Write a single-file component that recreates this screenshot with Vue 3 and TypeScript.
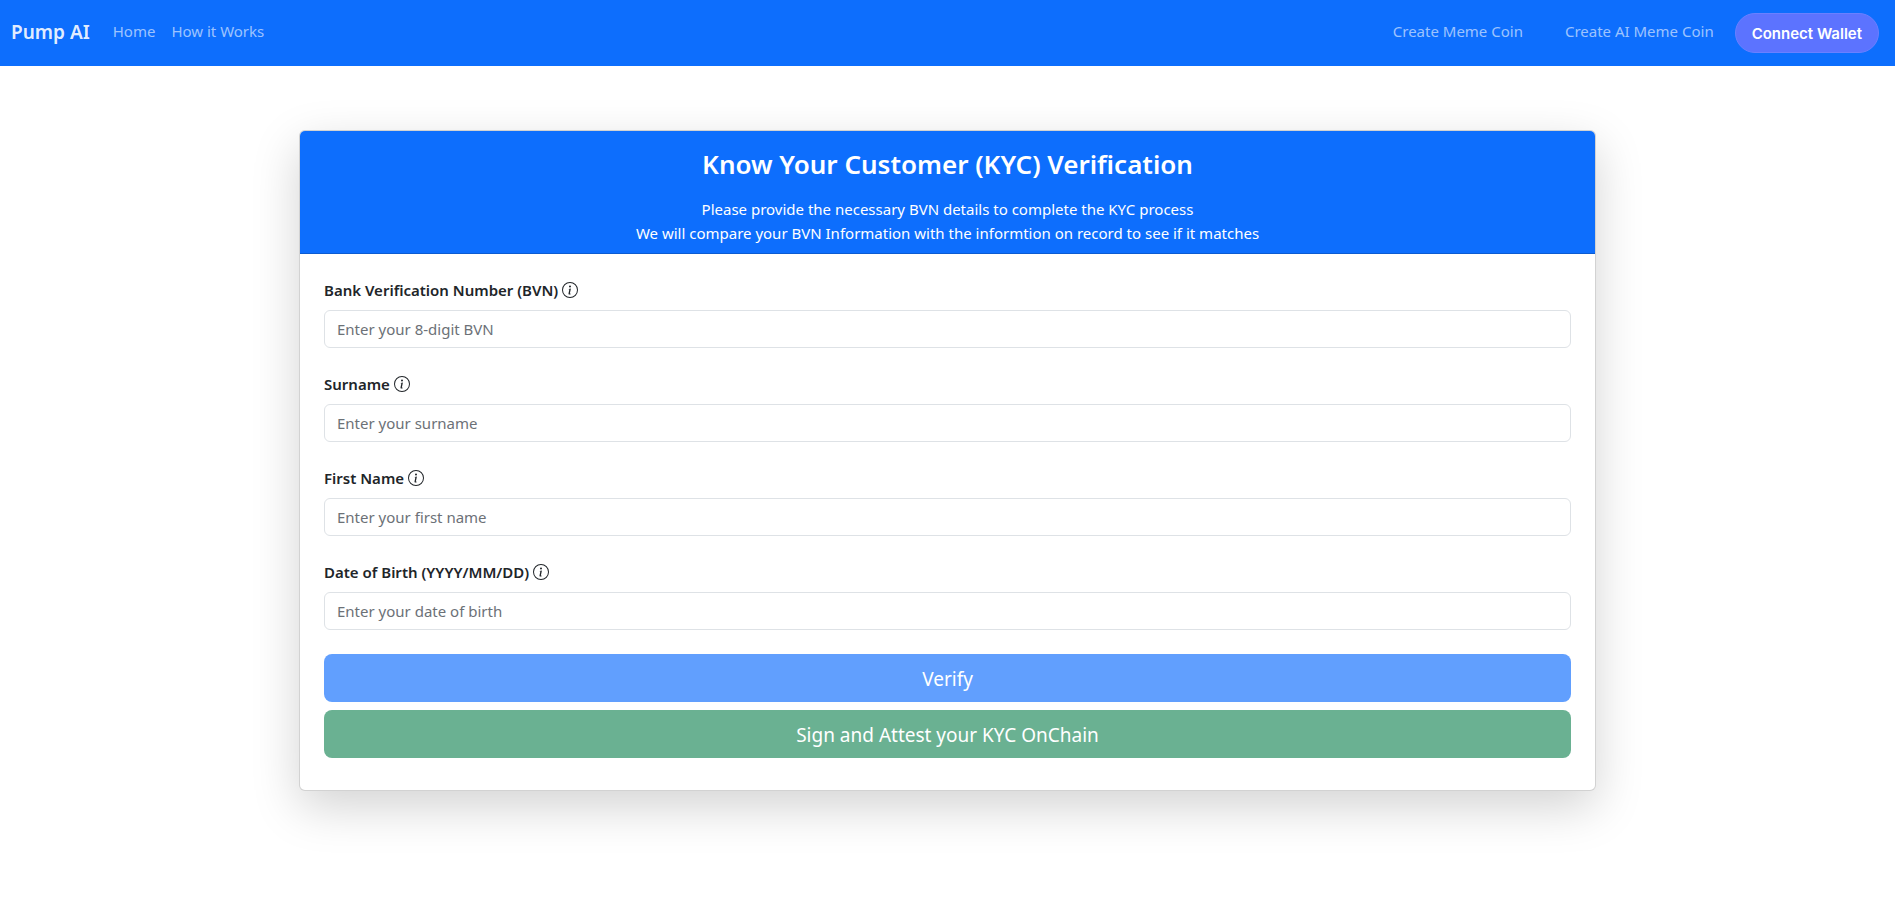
<script setup lang="ts">
import { reactive } from 'vue'

interface Field {
  id: string
  label: string
  placeholder: string
}

const fields: Field[] = [
  { id: 'bvn', label: 'Bank Verification Number (BVN)', placeholder: 'Enter your 8-digit BVN' },
  { id: 'surname', label: 'Surname', placeholder: 'Enter your surname' },
  { id: 'firstName', label: 'First Name', placeholder: 'Enter your first name' },
  { id: 'birthDate', label: 'Date of Birth (YYYY/MM/DD)', placeholder: 'Enter your date of birth' },
]

const form = reactive<Record<string, string>>({ bvn: '', surname: '', firstName: '', birthDate: '' })
</script>

<template>
  <div class="page">
    <nav class="navbar">
      <a class="brand" href="#">Pump AI</a>
      <a class="nav-link" href="#">Home</a>
      <a class="nav-link" href="#">How it Works</a>
      <div class="nav-end">
        <a class="nav-link" href="#">Create Meme Coin</a>
        <a class="nav-link" href="#">Create AI Meme Coin</a>
      </div>
      <button class="wallet" type="button">Connect Wallet</button>
    </nav>

    <main class="container">
      <section class="card">
        <header class="card-header">
          <h1 class="title">Know Your Customer (KYC) Verification</h1>
          <p class="lead">Please provide the necessary BVN details to complete the KYC process</p>
          <p class="lead">We will compare your BVN Information with the informtion on record to see if it matches</p>
        </header>
        <form class="card-body" @submit.prevent>
          <div v-for="field in fields" :key="field.id" class="field">
            <label class="label" :for="field.id">
              <span>{{ field.label }}</span>
              <svg class="info" viewBox="0 0 16 16" fill="currentColor" aria-hidden="true">
                <path d="M8 15A7 7 0 1 1 8 1a7 7 0 0 1 0 14m0 1A8 8 0 1 0 8 0a8 8 0 0 0 0 16" />
                <path d="m8.930 6.588-2.290.287-.082.380.450.083c.294.070.352.176.288.469l-.738 3.468c-.194.897.105 1.319.808 1.319.545 0 1.178-.252 1.465-.598l.088-.416c-.200.176-.492.246-.686.246-.275 0-.375-.193-.304-.533zM9 4.500a1 1 0 1 1-2 0 1 1 0 0 1 2 0" />
              </svg>
            </label>
            <input :id="field.id" v-model="form[field.id]" class="input" type="text" :placeholder="field.placeholder" />
          </div>
          <div class="actions">
            <button class="action verify" type="submit" disabled>Verify</button>
            <button class="action attest" type="button" disabled>Sign and Attest your KYC OnChain</button>
          </div>
        </form>
      </section>
    </main>
  </div>
</template>

<style>
body {
  margin: 0;
  background: #fff;
}
</style>

<style scoped>
.page {
  margin-right: 5px;
  font-family: "Noto Sans", "Open Sans", sans-serif;
  font-size: 15px;
  line-height: 24px;
  color: #212529;
}

.page *,
.page *::before {
  box-sizing: border-box;
}

.navbar {
  display: flex;
  align-items: center;
  height: 66px;
  padding: 0 16px 0 11px;
  background: #0d6efd;
}

.brand {
  margin-right: 15px;
  padding-bottom: 2px;
  font-size: 19px;
  font-weight: 600;
  color: rgba(255, 255, 255, 0.9);
  text-decoration: none;
}

.nav-link {
  padding: 6px 8px 10px;
  color: rgba(255, 255, 255, 0.6);
  text-decoration: none;
}

.nav-end {
  display: flex;
  gap: 26px;
  margin-left: auto;
  margin-right: 13px;
}

.wallet {
  height: 40px;
  padding: 0 16px;
  border: 1px solid #6a80ff;
  border-radius: 20px;
  background: #5c73ff;
  color: #fff;
  font-family: Inter, sans-serif;
  font-size: 15px;
  font-weight: 600;
}

.container {
  max-width: 1297px;
  margin: 0 auto;
  padding: 64px 0;
}

.card {
  border: 1px solid rgba(0, 0, 0, 0.175);
  border-radius: 6px;
  background: #fff;
  box-shadow: 0 16px 48px rgba(0, 0, 0, 0.175);
}

.card-header {
  padding: 16px 16px 8px;
  border-bottom: 1px solid #0b5bd1;
  border-radius: 5px 5px 0 0;
  background: #0d6efd;
  color: #fff;
  text-align: center;
}

.title {
  margin: 0 0 16px;
  font-size: 26px;
  font-weight: 600;
  line-height: 34px;
}

.lead {
  margin: 0;
}

.card-body {
  padding: 24px 24px 32px;
}

.field {
  margin-bottom: 24px;
}

.label {
  display: flex;
  align-items: center;
  gap: 4px;
  margin-bottom: 8px;
  font-weight: 600;
}

.info {
  width: 16px;
  height: 16px;
}

.input {
  display: block;
  width: 100%;
  height: 38px;
  padding: 6px 12px;
  border: 1px solid #dee2e6;
  border-radius: 6px;
  background: #fff;
  color: #212529;
  font: inherit;
}

.input::placeholder {
  color: #6c7177;
  opacity: 1;
}

.actions {
  display: grid;
  gap: 8px;
}

.action {
  height: 48px;
  padding: 2px 16px 0;
  border: 0;
  border-radius: 8px;
  color: #fff;
  font-family: inherit;
  font-size: 19px;
}

.verify {
  background: #619ffe;
}

.attest {
  background: #6ab192;
}
</style>
